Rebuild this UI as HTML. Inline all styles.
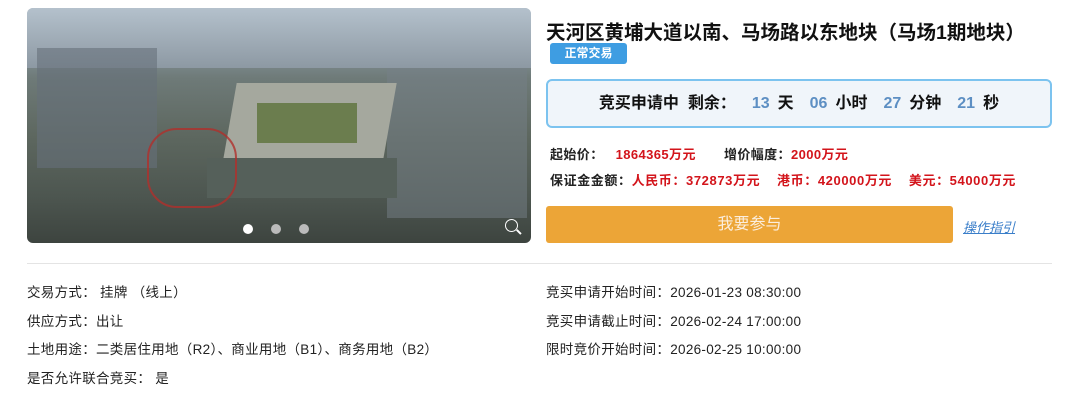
<!DOCTYPE html>
<html><head><meta charset="utf-8"><style>
*{margin:0;padding:0;box-sizing:border-box}
body{width:1080px;height:411px;background:#fff;font-family:"Liberation Sans","Noto Sans CJK SC",sans-serif;position:relative;overflow:hidden;color:#222}
.a{position:absolute;white-space:nowrap}
.img{left:27px;top:8px;width:504px;height:235px;border-radius:6px;overflow:hidden;
background:linear-gradient(180deg,#a9b6c2 0%,#8f9ea8 12%,#6e7a78 30%,#5d675f 55%,#4d5650 80%,#3d443f 100%)}
.r{color:#d3141b;font-weight:bold}
.b{font-weight:bold}
.n{color:#5d8fc3;font-weight:bold;margin:0 8px 0 16px}
</style></head><body>
<div class="a img">
<div class="a" style="left:0;top:0;width:504px;height:60px;background:linear-gradient(180deg,#b4c1cc,#8d99a3)"></div>
<div class="a" style="left:10px;top:40px;width:120px;height:120px;background:#66707a;opacity:.6"></div>
<div class="a" style="left:360px;top:60px;width:140px;height:150px;background:#757f87;opacity:.5"></div>
<div class="a" style="left:200px;top:75px;width:160px;height:110px;background:#a5a89e;transform:skewX(-10deg)"></div>
<div class="a" style="left:230px;top:95px;width:100px;height:40px;background:#6b7d4e"></div>
<div class="a" style="left:180px;top:150px;width:190px;height:40px;background:#55605a"></div>
<div class="a" style="left:120px;top:120px;width:90px;height:80px;border:2px solid #b0302c;border-radius:30px;opacity:.8"></div>
<div class="a" style="left:216px;top:216px;width:10px;height:10px;border-radius:50%;background:#fff"></div>
<div class="a" style="left:244px;top:216px;width:10px;height:10px;border-radius:50%;background:#bbb"></div>
<div class="a" style="left:272px;top:216px;width:10px;height:10px;border-radius:50%;background:#bbb"></div>
<div class="a" style="left:478px;top:211px;width:13px;height:13px;border-radius:50%;border:1.5px solid #fff"></div>
<div class="a" style="left:489px;top:223px;width:6px;height:1.5px;background:#fff;transform:rotate(45deg)"></div>
</div>
<div class="a b" style="left:546px;top:16px;font-size:19.5px;color:#111">天河区黄埔大道以南、马场路以东地块（马场1期地块）</div>
<div class="a b" style="left:550px;top:43px;width:77px;height:21px;background:#3e9de2;border-radius:3px;color:#fff;font-size:12px;text-align:center;line-height:21px">正常交易</div>
<div class="a" style="left:546px;top:79px;width:506px;height:49px;background:#f0f5fa;border:2px solid #7cc3ef;border-radius:6px;text-align:center;line-height:45px;font-size:16px;font-weight:bold;color:#111">竞买申请中&nbsp;&nbsp;剩余：<span class="n">13</span>天<span class="n">06</span>小时<span class="n">27</span>分钟<span class="n">21</span>秒</div>
<div class="a b" style="left:550px;top:144px;font-size:13px;letter-spacing:0.4px">起始价：&nbsp;&nbsp;&nbsp;<span class="r">1864365万元</span>&nbsp;&nbsp;&nbsp;&nbsp;&nbsp;&nbsp;&nbsp;增价幅度：<span class="r">2000万元</span></div>
<div class="a b" style="left:550px;top:170px;font-size:13px;letter-spacing:0.6px">保证金金额：<span class="r">人民币：372873万元&nbsp;&nbsp;&nbsp;&nbsp;港币：420000万元&nbsp;&nbsp;&nbsp;&nbsp;美元：54000万元</span></div>
<div class="a" style="left:546px;top:206px;width:407px;height:37px;background:#eca537;border-radius:3px;color:#fbeede;font-size:16px;text-align:center;line-height:37px">我要参与</div>
<div class="a" style="left:963px;top:217px;font-size:13px;color:#3a7ec9;text-decoration:underline;font-style:italic">操作指引</div>
<div class="a" style="left:27px;top:263px;width:1025px;height:1px;background:#e4e4e4"></div>
<div class="a" style="left:27px;top:279px;font-size:13.5px;line-height:28.5px;letter-spacing:0.3px">交易方式：&nbsp;挂牌 （线上）<br>供应方式：出让<br>土地用途：二类居住用地（R2）、商业用地（B1）、商务用地（B2）<br>是否允许联合竞买：&nbsp;是</div>
<div class="a" style="left:546px;top:279px;font-size:13.5px;line-height:28.5px;letter-spacing:0.3px">竞买申请开始时间：2026-01-23 08:30:00<br>竞买申请截止时间：2026-02-24 17:00:00<br>限时竞价开始时间：2026-02-25 10:00:00</div>
</body></html>
